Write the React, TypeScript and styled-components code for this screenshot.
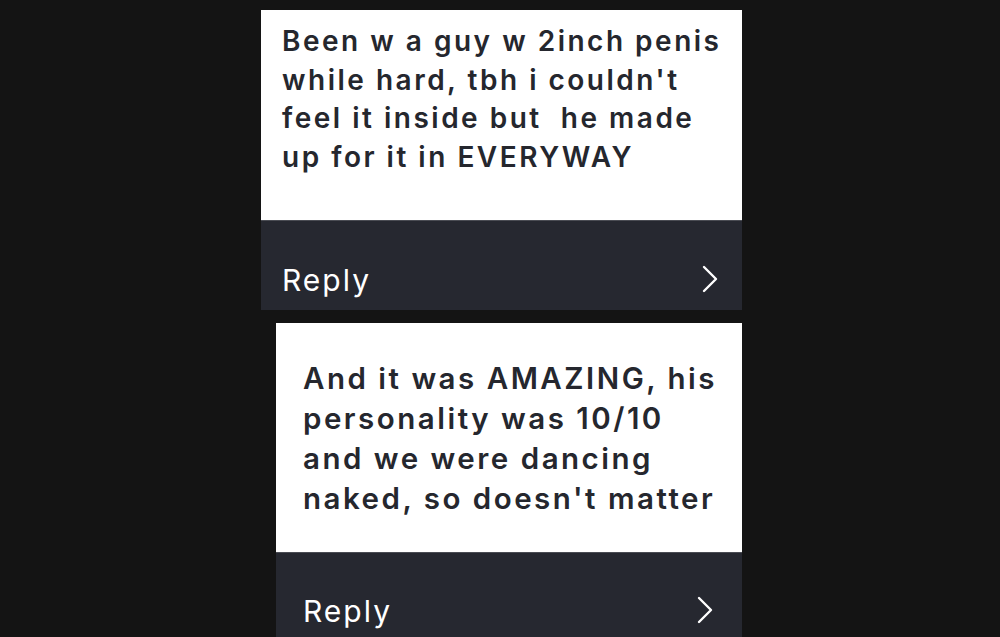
import styled, { createGlobalStyle } from "styled-components";

const GlobalStyle = createGlobalStyle`
  html, body {
    margin: 0;
    padding: 0;
    background: #141414;
  }
  body {
    width: 1000px;
    height: 637px;
    overflow: hidden;
    font-family: Inter, "Noto Sans", sans-serif;
  }
`;

interface CommentData {
  text: string[];
  indent: number;
  gapBefore: number;
  bodyHeight: number;
  padTop: number;
  fontSize: number;
  lineHeight: number;
  textLeft: number;
  footerHeight: number;
  replyTop: number;
  chevronRight: number;
}

const comments: CommentData[] = [
  {
    text: [
      "Been w a guy w 2inch penis",
      "while hard, tbh i couldn't",
      "feel it inside but  he made",
      "up for it in EVERYWAY",
    ],
    indent: 261,
    gapBefore: 10,
    bodyHeight: 211,
    padTop: 12,
    fontSize: 28,
    lineHeight: 38.5,
    textLeft: 21,
    footerHeight: 89,
    replyTop: 41,
    chevronRight: 24,
  },
  {
    text: [
      "And it was AMAZING, his",
      "personality was 10/10",
      "and we were dancing",
      "naked, so doesn't matter",
    ],
    indent: 276,
    gapBefore: 13,
    bodyHeight: 230,
    padTop: 35,
    fontSize: 29.5,
    lineHeight: 40,
    textLeft: 27,
    footerHeight: 100,
    replyTop: 40,
    chevronRight: 29,
  },
];

export default function App() {
  return (
    <>
      <GlobalStyle />
      <Page>
        {comments.map((c, i) => (
          <Card key={i} $indent={c.indent} $gap={c.gapBefore}>
            <Body
              $height={c.bodyHeight}
              $padTop={c.padTop}
              $left={c.textLeft}
              $size={c.fontSize}
              $lh={c.lineHeight}
            >
              {c.text.map((line, j) => (
                <Line key={j}>{line}</Line>
              ))}
            </Body>
            <Footer
              $height={c.footerHeight}
              $top={c.replyTop}
              $left={c.textLeft}
              $right={c.chevronRight}
            >
              <ReplyLabel>Reply</ReplyLabel>
              <Chevron viewBox="0 0 16 28" fill="none">
                <path
                  d="M2 2 L14 14 L2 26"
                  stroke="#ffffff"
                  strokeWidth="2.4"
                  strokeLinecap="round"
                  strokeLinejoin="round"
                />
              </Chevron>
            </Footer>
          </Card>
        ))}
      </Page>
    </>
  );
}

const Page = styled.div`
  width: 1000px;
  display: flex;
  flex-direction: column;
`;

const Card = styled.div<{ $indent: number; $gap: number }>`
  margin-left: ${(p) => p.$indent}px;
  margin-top: ${(p) => p.$gap}px;
  width: ${(p) => 742 - p.$indent}px;
  display: flex;
  flex-direction: column;
`;

const Body = styled.div<{
  $height: number;
  $padTop: number;
  $left: number;
  $size: number;
  $lh: number;
}>`
  box-sizing: border-box;
  height: ${(p) => p.$height}px;
  padding: ${(p) => p.$padTop}px 0 0 ${(p) => p.$left}px;
  background: #ffffff;
  color: #25272e;
  font-weight: 600;
  font-size: ${(p) => p.$size}px;
  line-height: ${(p) => p.$lh}px;
  letter-spacing: 2.5px;
  border-bottom: 1px solid #4a4c53;
`;

const Line = styled.div`
  white-space: pre;
`;

const Footer = styled.div<{
  $height: number;
  $top: number;
  $left: number;
  $right: number;
}>`
  box-sizing: border-box;
  height: ${(p) => p.$height}px;
  background: #262830;
  display: flex;
  align-items: flex-start;
  justify-content: space-between;
  padding: ${(p) => p.$top}px ${(p) => p.$right}px 0 ${(p) => p.$left}px;
`;

const ReplyLabel = styled.span`
  color: #ffffff;
  font-size: 30px;
  font-weight: 400;
  line-height: 36px;
  letter-spacing: 2px;
`;

const Chevron = styled.svg`
  width: 16px;
  height: 28px;
  margin-top: 3px;
`;
